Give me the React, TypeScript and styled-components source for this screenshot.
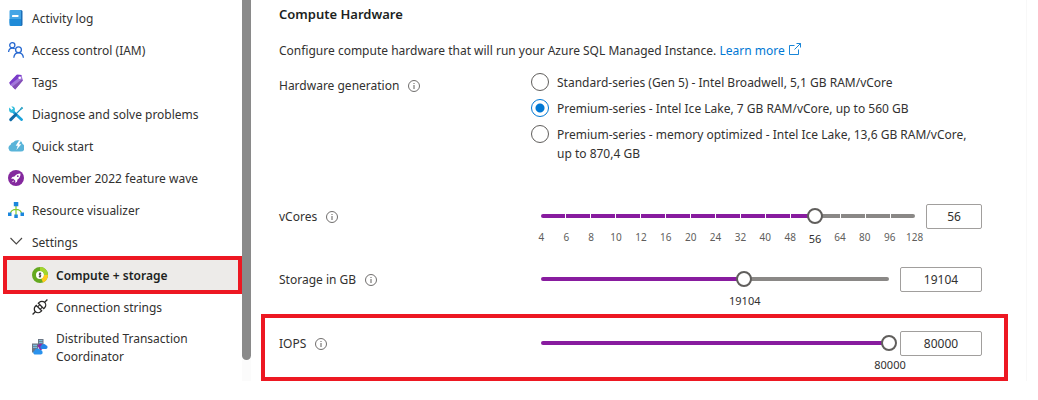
import React, { useState } from "react";
import styled, { createGlobalStyle } from "styled-components";

const GlobalStyle = createGlobalStyle`
  * { box-sizing: border-box; }
  body {
    margin: 0;
    background: #ffffff;
    color: #323130;
    font-family: "Noto Sans", "Open Sans", sans-serif;
    font-size: 12px;
    line-height: 18px;
  }
`;

const purple = "#881c9f";
const red = "#ed1822";

const Page = styled.div`
  display: flex;
  align-items: stretch;
  min-height: 376px;
`;

const Sidebar = styled.nav`
  flex: 0 0 242px;
  padding-top: 2px;
`;

const NavList = styled.ul`
  list-style: none;
  margin: 0;
  padding: 0;
`;

const SubList = styled(NavList)`
  padding-top: 1px;
`;

const NavLink = styled.a<{ $nested?: boolean; $active?: boolean }>`
  display: flex;
  align-items: center;
  gap: 8px;
  min-height: 32px;
  padding: 0 24px 0 ${(p) => (p.$nested ? 32 : 8)}px;
  color: ${(p) => (p.$active ? "#201f1e" : "#323130")};
  text-decoration: none;
  ${(p) =>
    p.$active &&
    `
    min-height: 38px;
    margin: -3px 0 -3px 3px;
    padding-left: 25px;
    border: 4px solid ${red};
    background: #edebe9;
    font-weight: 600;
  `}
`;

const NavText = styled.span<{ $wrap?: boolean }>`
  padding: ${(p) => (p.$wrap ? "7px 0 5px" : "2px 0 0")};
`;

const NavIcon = styled.svg`
  flex: none;
  width: 16px;
  height: 16px;
`;

const ScrollLane = styled.div`
  flex: 0 0 9px;
  background: #fbfbfb;
`;

const ScrollThumb = styled.div`
  height: 360px;
  border-radius: 0 0 5px 5px;
  background: #8a8a8a;
`;

const Main = styled.main`
  flex: 1;
  min-width: 0;
  margin-right: 11px;
  padding: 4px 18px 0 10px;
  border-right: 1px solid #f8f8f8;
`;

const Intro = styled.header`
  padding: 0 18px;
  line-height: 20px;
`;

const Heading = styled.h2`
  margin: 0 0 17px;
  font-size: 13px;
  font-weight: 600;
  line-height: 20px;
  color: #201f1e;
`;

const Description = styled.p`
  margin: 0;
`;

const LearnMore = styled.a`
  color: #0078d4;
  text-decoration: none;
`;

const LinkIcon = styled.svg`
  width: 12px;
  height: 12px;
  margin-left: 4px;
`;

const HardwareRow = styled.fieldset`
  display: grid;
  grid-template-columns: 252px 1fr;
  margin: 12px 0 0;
  padding: 0 26px 0 18px;
  border: 0;
`;

const LabelBox = styled.div`
  display: flex;
  align-items: center;
  gap: 9px;
  height: 24px;
  padding-top: 2px;
`;

const InfoIcon = styled.svg`
  width: 12px;
  height: 12px;
  color: #605e5c;
`;

const Options = styled.div`
  display: grid;
  gap: 7px;
`;

const Option = styled.label`
  display: flex;
  align-items: flex-start;
  gap: 8px;
  line-height: 19px;
`;

const Radio = styled.input`
  flex: none;
  appearance: none;
  width: 18px;
  height: 18px;
  margin: 0;
  border: 1px solid #605e5c;
  border-radius: 50%;
  &:checked {
    border-color: #0078d4;
    background: radial-gradient(circle, #0078d4 4px, transparent 5px);
  }
`;

const Sliders = styled.div`
  margin-top: 24px;
`;

const SliderRow = styled.div<{ $highlight?: boolean }>`
  display: grid;
  grid-template-columns: 262px 1fr auto;
  min-height: ${(p) => (p.$highlight ? 67 : 63)}px;
  margin-top: ${(p) => (p.$highlight ? 1 : 0)}px;
  padding: 13px 22px 0 14px;
  border: 4px solid ${(p) => (p.$highlight ? red : "transparent")};
  border-bottom-width: ${(p) => (p.$highlight ? 4 : 0)}px;
`;

const SliderBody = styled.div`
  min-width: 0;
  margin-right: 11px;
`;

const Stack = styled.div`
  display: grid;
  align-items: center;
  height: 24px;
`;

const Rail = styled.div`
  display: flex;
  gap: 1px;
  grid-area: 1 / 1;
  height: 4px;
  border-radius: 2px;
  overflow: hidden;
`;

const Segment = styled.span<{ $filled: boolean }>`
  flex: 1;
  background: ${(p) => (p.$filled ? purple : "#8a8886")};
`;

const Range = styled.input`
  grid-area: 1 / 1;
  appearance: none;
  width: calc(100% + 16px);
  height: 16px;
  margin: 0 -8px;
  background: transparent;
  &::-webkit-slider-thumb {
    appearance: none;
    width: 16px;
    height: 16px;
    border: 2px solid #605e5c;
    border-radius: 50%;
    background: #ffffff;
  }
`;

const Ticks = styled.div`
  display: grid;
  grid-template-columns: repeat(16, 1fr);
  margin: 0 -12px;
  text-align: center;
`;

const Tick = styled.span<{ $active: boolean }>`
  font-size: ${(p) => (p.$active ? 11 : 10)}px;
  line-height: ${(p) => (p.$active ? 22 : 18)}px;
  color: ${(p) => (p.$active ? "#323130" : "#605e5c")};
`;

const ValueTrack = styled.div`
  display: flex;
  margin-right: -24px;
`;

const ValueSpacer = styled.span`
  flex: none;
`;

const ValueLabel = styled.output`
  flex: none;
  width: 48px;
  margin-left: -23px;
  text-align: center;
  font-size: 11px;
  line-height: 20px;
`;

const NumberBox = styled.input<{ $wide?: boolean }>`
  width: ${(p) => (p.$wide ? 82 : 56)}px;
  height: 25px;
  padding: 0;
  border: 1px solid #a19f9d;
  border-radius: 2px;
  text-align: center;
  font: inherit;
  color: #323130;
`;

const icons: Record<string, React.ReactNode> = {
  log: (
    <>
      <path d="M3.500 0H13a1.500 1.500 0 0 1 1.500 1.500V14.500A1.500 1.500 0 0 1 13 16H3z" fill="#1b6fb8" />
      <path d="M2.800 0H12a1 1 0 0 1 1 1v12.500H1.500V1.300A1.300 1.300 0 0 1 2.800 0z" fill="#46a5e5" />
      <path d="M1.500 9H13v6a1 1 0 0 1-1 1H2.800a1.300 1.300 0 0 1-1.300-1.300z" fill="#1f8bd8" />
      <rect x="4" y="5" width="6.500" height="2" rx=".4" fill="#fff" />
    </>
  ),
  people: (
    <g fill="none" stroke="#2567d0" strokeWidth="1.300">
      <circle cx="4.300" cy="3.300" r="2.600" />
      <path d="M.6 10c.2-2.400 1.700-3.900 3.800-3.900 1 0 1.700.3 2.300.7" />
      <circle cx="10.500" cy="7.800" r="2.900" />
      <path d="M5.800 15.700c.3-3 2.200-4.900 4.700-4.900s4.600 1.900 4.900 4.900" />
    </g>
  ),
  tag: (
    <>
      <path d="M9.300.5 13.500 1l1.300 5.300-7.500 9-6-6.300z" fill="#a378da" />
      <path d="M1.300 8.400 8.600.8 13.700 1l-2 2.500-7.400 7.800H2.200z" fill="#7a3bc9" />
      <path d="M2.300 10.600 10 4.500l3.500-1.200 1.300 3.200-7.600 9z" fill="#a378da" />
      <path d="m4.300 12.700 9.300-7.200 1.200 1-7.600 9z" fill="#8450b4" />
      <circle cx="11.700" cy="3.800" r="1.300" fill="#fff" />
    </>
  ),
  tools: (
    <>
      <path d="M4.500 5 13.700 13.700" stroke="#1ca4dc" strokeWidth="2.600" strokeLinecap="round" />
      <path d="M1.300 1.600 3.700 4l1.500-1.400L3.300.6C6 .1 7.700 2.200 6.700 4.700L4.800 6.600C2.300 7.600.3 5.300 1.300 1.600z" fill="#32bedd" />
      <path d="m14.500 1.500-6.700 6.700" stroke="#1c93bf" strokeWidth="1.200" />
      <path d="M7.600 8.700 2.700 13.600" stroke="#0f6ca8" strokeWidth="3" strokeLinecap="round" />
      <path d="m13.500.8 1.700 1.700-2.200 1.200-.8-.8z" fill="#3aa9c9" />
    </>
  ),
  cloud: (
    <>
      <path d="M3.600 13.500A3.500 3.500 0 0 1 2.600 6.800 3 3 0 0 1 5.300 4.300 5 5 0 0 1 10 2.200c2.500 0 4.200 1.600 4.500 3.900a3.900 3.900 0 0 1-1.900 7.400z" fill="#59b4d9" />
      <path d="M11.200 2.200 7.700 7.700h2.100L8.400 12 13.300 6.300h-2.400l2-3.300z" fill="#fff" />
    </>
  ),
  rocket: (
    <>
      <circle cx="8" cy="8" r="8" fill="#84289e" />
      <path d="M12.500 3.400c-2.800 0-4.600 1-6 3.100L4.300 7l-1.200 1.800 2.200-.1L7.400 10.800l-.2 2.200 1.800-1.200.5-2.300c2.100-1.400 3.100-3.200 3-6.100z" fill="#fff" />
      <path d="m3.500 12.600 1.900-2 .7.700z" fill="#fff" />
      <circle cx="9.800" cy="6.200" r=".9" fill="#84289e" />
    </>
  ),
  graph: (
    <>
      <path d="M8 3v11M2.300 12c.4-3.200 2.500-4.500 5.700-4.500s5.300 1.300 5.700 4.500M5.500 7.500h5" fill="none" stroke="#80c82c" strokeWidth="1.200" />
      <path d="M5.800 0h4.500v4.300H5.800zM0 10.500h3.500V14H0zM12.500 10.500H16V14h-3.500zM6.300 12.500h3.500V16H6.300z" fill="#1b87dd" />
    </>
  ),
  chevron: <path d="m2.500 4 5.800 6 5.700-6" fill="none" stroke="#484644" strokeWidth="1.100" />,
  compute: (
    <>
      <circle cx="8" cy="8" r="6" fill="#fff" stroke="#64a91f" strokeWidth="4" />
      <path d="M8 2a6 6 0 0 1 6 6" fill="none" stroke="#a3d52d" strokeWidth="4" />
      <path d="M14 8a6 6 0 0 1-3.800 5.600" fill="none" stroke="#ffcb1b" strokeWidth="4" />
      <path d="M9.200 6.700C7.700 5.800 6.500 6.900 7.500 7.700l1 .6c1.100.8-.3 1.900-1.700 1.100M8 5.500v5" fill="none" stroke="#333" strokeWidth="1" />
    </>
  ),
  plug: (
    <g transform="translate(8 8) rotate(-45)" fill="none" stroke="#292827" strokeWidth="1.300">
      <path d="M-10.500 0h4.200M6.300 0h4.200" />
      <path d="M-1.500-3.800h-1.200a3.800 3.800 0 0 0 0 7.600h1.200zM1.500-3.800h1.200a3.800 3.800 0 0 1 0 7.600H1.500z" />
      <path d="M-1.500-1.800h3M-1.500 1.800h3" strokeWidth="1" />
    </g>
  ),
  distributed: (
    <>
      <path d="M6 0h5.500v8H6zM0 4.500h6v9H0z" fill="#6b7686" />
      <path d="M7 1.700h3.500M7 3.700h3.500M1 6.300h4M1 8.300h4" stroke="#7fd0f2" />
      <path d="m5.300 6.300 4-2 2 5-3 2.500z" fill="#8a2da5" />
      <path d="M9.300 10A2 2 0 0 1 9.300 6.600 2.700 2.700 0 0 1 14 6.300a1.900 1.900 0 0 1 .2 3.700z" fill="#2385e8" />
      <path d="M2.500 15.500a2.200 2.200 0 0 1 .1-4 3 3 0 0 1 5.600-.5 2.300 2.300 0 0 1 .8 4.500z" fill="#2a92ed" />
    </>
  ),
};

function Glyph({ name }: { name: string }) {
  return (
    <NavIcon viewBox="0 0 16 16" aria-hidden="true">
      {icons[name]}
    </NavIcon>
  );
}

interface NavItem {
  text: string;
  icon: string;
  active?: boolean;
  wrap?: boolean;
}

const navItems: NavItem[] = [
  { text: "Activity log", icon: "log" },
  { text: "Access control (IAM)", icon: "people" },
  { text: "Tags", icon: "tag" },
  { text: "Diagnose and solve problems", icon: "tools" },
  { text: "Quick start", icon: "cloud" },
  { text: "November 2022 feature wave", icon: "rocket" },
  { text: "Resource visualizer", icon: "graph" },
  { text: "Settings", icon: "chevron" },
];

const settingsItems: NavItem[] = [
  { text: "Compute + storage", icon: "compute", active: true },
  { text: "Connection strings", icon: "plug" },
  { text: "Distributed Transaction Coordinator", icon: "distributed", wrap: true },
];

const hardware = [
  "Standard-series (Gen 5) - Intel Broadwell, 5,1 GB RAM/vCore",
  "Premium-series - Intel Ice Lake, 7 GB RAM/vCore, up to 560 GB",
  "Premium-series - memory optimized - Intel Ice Lake, 13,6 GB RAM/vCore, up to 870,4 GB",
];

const coreSteps = [4, 6, 8, 10, 12, 16, 20, 24, 32, 40, 48, 56, 64, 80, 96, 128];

function NavEntry({ item, nested }: { item: NavItem; nested?: boolean }) {
  return (
    <li>
      <NavLink href="#" $nested={nested} $active={item.active}>
        <Glyph name={item.icon} />
        <NavText $wrap={item.wrap}>{item.text}</NavText>
      </NavLink>
    </li>
  );
}

function Info() {
  return (
    <InfoIcon viewBox="0 0 12 12" aria-hidden="true">
      <circle cx="6" cy="6" r="5.500" fill="none" stroke="currentColor" strokeWidth=".9" />
      <path d="M6 5v4M6 3v1" stroke="currentColor" strokeWidth="1" />
    </InfoIcon>
  );
}

function CoresSlider() {
  const [index, setIndex] = useState(11);
  return (
    <SliderRow>
      <LabelBox>
        <label htmlFor="vcores">vCores</label>
        <Info />
      </LabelBox>
      <SliderBody>
        <Stack>
          <Rail>
            {coreSteps.slice(1).map((step, i) => (
              <Segment key={step} $filled={i < index} />
            ))}
          </Rail>
          <Range
            type="range"
            id="vcores"
            min={0}
            max={15}
            value={index}
            onChange={(e) => setIndex(Number(e.target.value))}
          />
        </Stack>
        <Ticks>
          {coreSteps.map((step, i) => (
            <Tick key={step} $active={i === index}>
              {step}
            </Tick>
          ))}
        </Ticks>
      </SliderBody>
      <NumberBox aria-label="vCores value" value={coreSteps[index]} readOnly />
    </SliderRow>
  );
}

interface AmountProps {
  id: string;
  label: string;
  initial: number;
  min: number;
  max: number;
  highlight?: boolean;
}

function AmountSlider({ id, label, initial, min, max, highlight }: AmountProps) {
  const [value, setValue] = useState(initial);
  const percent = ((value - min) / (max - min)) * 100;
  return (
    <SliderRow $highlight={highlight}>
      <LabelBox>
        <label htmlFor={id}>{label}</label>
        <Info />
      </LabelBox>
      <SliderBody>
        <Stack>
          <Rail style={{ background: `linear-gradient(to right, ${purple} ${percent}%, #8a8886 ${percent}%)` }} />
          <Range
            type="range"
            id={id}
            min={min}
            max={max}
            value={value}
            onChange={(e) => setValue(Number(e.target.value))}
          />
        </Stack>
        <ValueTrack>
          <ValueSpacer style={{ width: `calc((100% - 24px) * ${percent / 100})` }} />
          <ValueLabel htmlFor={id}>{value}</ValueLabel>
        </ValueTrack>
      </SliderBody>
      <NumberBox
        $wide
        aria-label={`${label} value`}
        value={value}
        onChange={(e) => setValue(Number(e.target.value) || min)}
      />
    </SliderRow>
  );
}

export default function App() {
  const [series, setSeries] = useState(1);
  return (
    <>
      <GlobalStyle />
      <Page>
        <Sidebar aria-label="Resource menu">
          <NavList>
            {navItems.map((item) => (
              <NavEntry key={item.text} item={item} />
            ))}
          </NavList>
          <SubList>
            {settingsItems.map((item) => (
              <NavEntry key={item.text} item={item} nested />
            ))}
          </SubList>
        </Sidebar>
        <ScrollLane>
          <ScrollThumb />
        </ScrollLane>
        <Main>
          <Intro>
            <Heading>Compute Hardware</Heading>
            <Description>
              Configure compute hardware that will run your Azure SQL Managed Instance.{" "}
              <LearnMore href="#">
                Learn more
                <LinkIcon viewBox="0 0 12 12" aria-hidden="true">
                  <path
                    d="M5.500 2.500h-5v9h9v-5M7.500.5h4v4M11.500.5 5.500 6.500"
                    fill="none"
                    stroke="currentColor"
                    strokeWidth=".9"
                  />
                </LinkIcon>
              </LearnMore>
            </Description>
          </Intro>
          <HardwareRow aria-labelledby="generation">
            <LabelBox>
              <span id="generation">Hardware generation</span>
              <Info />
            </LabelBox>
            <Options>
              {hardware.map((text, i) => (
                <Option key={text}>
                  <Radio type="radio" name="series" checked={series === i} onChange={() => setSeries(i)} />
                  <span>{text}</span>
                </Option>
              ))}
            </Options>
          </HardwareRow>
          <Sliders>
            <CoresSlider />
            <AmountSlider id="storage" label="Storage in GB" initial={19104} min={32} max={32768} />
            <AmountSlider id="iops" label="IOPS" initial={80000} min={300} max={80000} highlight />
          </Sliders>
        </Main>
      </Page>
    </>
  );
}
